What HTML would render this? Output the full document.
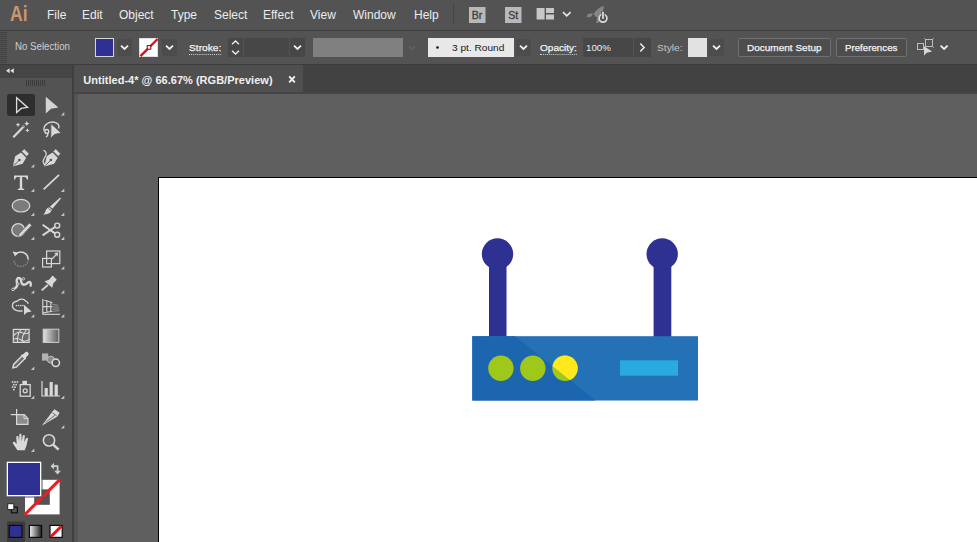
<!DOCTYPE html>
<html><head><meta charset="utf-8">
<style>
*{margin:0;padding:0;box-sizing:border-box}
html,body{width:977px;height:542px;overflow:hidden;background:#5f5f5f;font-family:"Liberation Sans",sans-serif;}
div{position:absolute}
#menubar{left:0;top:0;width:977px;height:30px;background:#535353;}
.ai{left:9.5px;top:1px;font-size:21.5px;font-weight:bold;color:#c9976f;line-height:26px;transform-origin:0 0;transform:scaleX(.82)}
.m{top:7px;font-size:12px;color:#ececec;line-height:16px;white-space:nowrap}
#ctrl{left:0;top:31px;width:977px;height:33px;background:#535353;}
#sep1{left:0;top:30px;width:977px;height:1px;background:#3d3d3d}
#sep2{left:0;top:64px;width:977px;height:1px;background:#3d3d3d}
.t{font-size:9.8px;color:#e8e8e8;line-height:12px;white-space:nowrap;top:42.2px;transform-origin:0 50%}
.u{border-bottom:1px dotted #cfcfcf;padding-bottom:0px}
.dk{background:#474747;top:38px;height:19px}
.dd{background:#4c4c4c;top:39px;height:17px;width:15px;border-radius:1px}
.btn{top:38px;height:19px;border:1px solid #707070;border-radius:2px;background:#4d4d4d}
#tools{left:0;top:65px;width:72px;height:477px;background:#535353;}
#toolsedge{left:72px;top:65px;width:2px;height:477px;background:#3f3f3f}
#toolhdr{left:0;top:65px;width:72px;height:12.5px;background:#454545}
#tabbar{left:74px;top:65px;width:903px;height:28px;background:#424242}
#tab{left:74px;top:65px;width:229px;height:26.5px;background:#4f4f4f}
#tabline{left:74px;top:91.5px;width:903px;height:2px;background:#454545}
#tabtxt{left:83.3px;letter-spacing:.02px;top:73px;font-size:11px;font-weight:bold;color:#f0f0f0;line-height:14px;white-space:nowrap}
#art{left:158px;top:177px;width:819px;height:365px;background:#fff;border-left:1px solid #000;border-top:1px solid #000}
svg{position:absolute;left:0;top:0}
</style></head><body>
<div id="menubar">
<div class="ai">Ai</div>
<div class="m" style="left:47px">File</div>
<div class="m" style="left:82px">Edit</div>
<div class="m" style="left:119px">Object</div>
<div class="m" style="left:171px">Type</div>
<div class="m" style="left:214px">Select</div>
<div class="m" style="left:263px">Effect</div>
<div class="m" style="left:310px">View</div>
<div class="m" style="left:353px">Window</div>
<div class="m" style="left:414px">Help</div>
</div>
<div id="sep1"></div>
<div id="ctrl"></div>
<div id="sep2"></div>
<!-- control bar items -->
<div style="left:0;top:32px;width:7px;height:32px;background:repeating-linear-gradient(180deg,#414141 0,#414141 1px,#525252 1px,#525252 2px)"></div>
<div class="t" id="nosel" style="transform:scaleX(0.970);font-size:10px;top:40.7px;left:15.0px;color:#cecece">No Selection</div>
<div style="left:95px;top:38px;width:19px;height:19px;background:#2e3192;border:1px solid #d6d6d6"></div>
<div class="dd" style="left:117px"></div>
<div style="left:139.300px;top:37.800px;width:19px;height:19px;background:#fff;border:1px solid #e0e0e0"></div>
<div class="dd" style="left:162px"></div>
<div class="t u" id="stroke" style="transform:scaleX(1.040);-webkit-text-stroke:.25px #f2f2f2;left:188.6px;color:#f2f2f2">Stroke:</div>
<div class="dk" style="left:228px;width:15px"></div>
<div class="dk" style="left:244px;width:45px"></div>
<div class="dk" style="left:290px;width:15px"></div>
<div style="left:313px;top:38px;width:90px;height:19px;background:#808080"></div>
<div style="left:428px;top:38px;width:86px;height:19px;background:#e8e8e8"></div>
<div class="t" id="brush" style="transform:scaleX(1.034);left:452.0px;color:#1a1a1a">3 pt. Round</div>
<div class="dd" style="left:516px"></div>
<div class="t u" id="opac" style="transform:scaleX(1.024);-webkit-text-stroke:.25px #f2f2f2;left:539.6px;color:#f2f2f2">Opacity:</div>
<div class="dk" style="left:583px;width:50px"></div>
<div class="dk" style="left:634px;width:17px"></div>
<div class="t" id="pct" style="transform:scaleX(1.043);font-size:9.3px;top:41.8px;left:585.6px;color:#f0f0f0">100%</div>
<div class="t" id="style" style="transform:scaleX(1.040);left:656.6px;color:#c4c4c4">Style:</div>
<div style="left:688px;top:38px;width:19px;height:19px;background:#e2e2e2"></div>
<div class="dd" style="left:709px"></div>
<div class="btn" style="left:738px;width:93px"></div>
<div class="t" id="docsetup" style="transform:scaleX(1.022);-webkit-text-stroke:.25px #f2f2f2;left:747.1px;color:#f4f4f4">Document Setup</div>
<div class="btn" style="left:836px;width:71px"></div>
<div class="t" id="prefs" style="transform:scaleX(0.992);-webkit-text-stroke:.25px #f2f2f2;left:845.3px;color:#f4f4f4">Preferences</div>

<div id="tools"></div>
<div id="toolhdr"></div>
<div id="toolsedge"></div>
<div id="tabbar"></div>
<div id="tab"></div>
<div id="tabline"></div>
<div id="tabtxt">Untitled-4* @ 66.67% (RGB/Preview)</div>
<div style="left:74px;top:93.5px;width:4px;height:449px;background:#545454"></div>
<div id="art"></div>

<!-- ROUTER -->
<svg id="router" width="977" height="542">
<rect x="489" y="254" width="17.5" height="84" fill="#2e3192"/>
<circle cx="497.5" cy="254" r="15.7" fill="#2e3192"/>
<rect x="653.6" y="254" width="17.7" height="84" fill="#2e3192"/>
<circle cx="662.2" cy="254" r="15.7" fill="#2e3192"/>
<rect x="472.3" y="336.2" width="225.7" height="64.3" fill="#2471b5"/>
<path d="M472.3 336.2H515L595.500 400.500H472.3Z" fill="#1c65af"/>
<clipPath id="lt"><path d="M515 336.2L595.500 400.500H700V336.2Z"/></clipPath>
<circle cx="500.9" cy="368.2" r="12.7" fill="#9fc81a"/>
<circle cx="532.8" cy="368.2" r="12.7" fill="#9fc81a"/>
<circle cx="565" cy="368.2" r="12.7" fill="#9fc81a"/>
<circle cx="565" cy="368.2" r="12.7" fill="#fde91c" clip-path="url(#lt)"/>
<rect x="620" y="360.300" width="58" height="15.400" fill="#29abe2"/>
</svg>
<!-- ICONS -->
<svg id="icons" width="977" height="542">

<!-- menubar icons -->
<rect x="453" y="4" width="1" height="20" fill="#454545"/>
<rect x="469" y="7" width="16.5" height="16" fill="#b9b9b9"/>
<text x="471.8" y="19.3" font-size="10.5" fill="#3c3c3c" stroke="#3c3c3c" stroke-width=".3" font-family="Liberation Sans">Br</text>
<rect x="505" y="7" width="16.5" height="16" fill="#b9b9b9"/>
<text x="508.3" y="19.3" font-size="10.5" fill="#3c3c3c" stroke="#3c3c3c" stroke-width=".3" font-family="Liberation Sans">St</text>
<rect x="536.6" y="8" width="8" height="11.5" fill="#c8c8c8"/>
<rect x="546" y="8" width="8" height="5" fill="#c8c8c8"/>
<rect x="546" y="14.5" width="8" height="5" fill="#c8c8c8"/>
<path d="M563 12.2l3.8 3.6 3.8-3.6" stroke="#e8e8e8" stroke-width="1.6" fill="none"/>
<!-- gpu rocket -->
<g fill="#868686" transform="translate(0 2.6)">
<path d="M604 3.500c-4.500 1-8 4-10.500 8l3.500 3.800c4-2.500 6.500-6.500 7-11.800z"/>
<path d="M593.400 10.600l-5.600.9-1.300 3.100 4.600-.4zM597.300 15.500l-1.200 5.200 2.600-.6 1.400-5.800z"/>
</g>
<circle cx="603" cy="18.300" r="3.900" fill="#535353" stroke="#dcdcdc" stroke-width="1.700"/>
<rect x="601.300" y="11" width="3.400" height="7.400" fill="#535353"/>
<rect x="602.100" y="11.800" width="1.800" height="7" fill="#dcdcdc"/>
<!-- control bar glyphs -->

<path d="M121 45.6l3.500 3.300 3.500-3.300" stroke="#f0f0f0" stroke-width="1.800" fill="none"/>
<path d="M166 45.6l3.500 3.300 3.500-3.300" stroke="#f0f0f0" stroke-width="1.800" fill="none"/>
<path d="M140.500 56.200L157.600 39" stroke="#d9101c" stroke-width="2.400"/>
<rect x="147.200" y="45.600" width="3.600" height="3.600" fill="#fff" stroke="#7a0a10" stroke-width="1"/>
<path d="M232 44.3l3.5-3.3 3.5 3.3M232 50.7l3.5 3.3 3.5-3.3" stroke="#ededed" stroke-width="1.4" fill="none"/>
<path d="M294 45.6l3.500 3.300 3.500-3.300" stroke="#f0f0f0" stroke-width="1.800" fill="none"/>
<path d="M409 46l3.3 3.2 3.3-3.2" stroke="#626262" stroke-width="1.4" fill="none"/>
<circle cx="437.5" cy="47.5" r="1.3" fill="#111"/>
<path d="M520 45.6l3.500 3.300 3.500-3.300" stroke="#f0f0f0" stroke-width="1.800" fill="none"/>
<path d="M640.3 43.5l3.8 4-3.8 4" stroke="#ededed" stroke-width="1.5" fill="none"/>
<path d="M713 45.6l3.500 3.300 3.500-3.300" stroke="#f0f0f0" stroke-width="1.800" fill="none"/>
<!-- arrange icon -->
<g fill="none" stroke="#bdbdbd" stroke-width="1"><rect x="917.500" y="43.500" width="6" height="6"/><rect x="925.500" y="39.500" width="7" height="7"/><path d="M924.300 38.300l1.200 1.200M933.700 38.300l-1.200 1.200M933.700 47.700l-1.200-1.200"/></g>
<path d="M924 46.200v9.400l2.800-2.800 5.400-1.400z" fill="#d6d6d6"/>
<path d="M940.6 45.6l3.500 3.300 3.500-3.300" stroke="#f0f0f0" stroke-width="1.800" fill="none"/>
<!-- tab close -->
<path d="M289.200 76.300l5.600 6M294.800 76.300l-5.600 6" stroke="#f2f2f2" stroke-width="1.900"/>
<!-- tool header -->
<path d="M9.600 68.200l-3.600 2.500 3.600 2.500zM13.800 68.200l-3.600 2.500 3.600 2.500z" fill="#e0e0e0"/>
<g fill="#3c3c3c"><rect x="26" y="80" width="1" height="6"/><rect x="28" y="80" width="1" height="6"/><rect x="30" y="80" width="1" height="6"/><rect x="32" y="80" width="1" height="6"/><rect x="34" y="80" width="1" height="6"/><rect x="36" y="80" width="1" height="6"/><rect x="38" y="80" width="1" height="6"/><rect x="40" y="80" width="1" height="6"/><rect x="42" y="80" width="1" height="6"/><rect x="44" y="80" width="1" height="6"/></g>

<!-- TOOLS -->
<rect x="7" y="94" width="28" height="22" rx="2.5" fill="#2e2e2e"/>
<path d="M64.3 115.5v-3.4l-3.4 3.4zM34.3 167.5v-3.4l-3.4 3.4zM34.3 192v-3.4l-3.4 3.4zM64.3 192v-3.4l-3.4 3.4zM34.3 216v-3.4l-3.4 3.4zM64.3 216v-3.4l-3.4 3.4zM34.3 240v-3.4l-3.4 3.4zM64.3 240v-3.4l-3.4 3.4zM34.3 269.5v-3.4l-3.4 3.4zM64.3 269.5v-3.4l-3.4 3.4zM34.3 293.5v-3.4l-3.4 3.4zM64.3 293.5v-3.4l-3.4 3.4zM34.3 317.5v-3.4l-3.4 3.4zM64.3 317.5v-3.4l-3.4 3.4zM34.3 370v-3.4l-3.4 3.4zM34.3 399v-3.4l-3.4 3.4zM64.3 399v-3.4l-3.4 3.4zM64.3 428.5v-3.4l-3.4 3.4zM34.3 452v-3.4l-3.4 3.4z" fill="#c4c4c4"/>
<!-- selection -->
<path d="M16.6 97.8V112.6L21.2 108.4L27.6 107.4Z" fill="none" stroke="#dedede" stroke-width="1.3" stroke-linejoin="miter"/>
<!-- direct selection -->
<path d="M45.8 96.8V113.6L51 108.8L58.4 107.6Z" fill="#d4d4d4"/>
<!-- magic wand -->
<path d="M13.3 137.2L24.2 126" stroke="#d8d8d8" stroke-width="2.2"/>
<path d="M22.6 125.2l1.6 1.6" stroke="#8a8a8a" stroke-width="2.2"/>
<g fill="#d8d8d8"><path d="M18 122.5l.7 1.6 1.6.7-1.6.7-.7 1.6-.7-1.6-1.6-.7 1.6-.7z"/><path d="M26.8 121l.8 1.8 1.8.8-1.8.8-.8 1.8-.8-1.8-1.8-.8 1.8-.8z"/><path d="M27.4 128.2l.7 1.5 1.5.7-1.5.7-.7 1.5-.7-1.5-1.5-.7 1.5-.7z"/></g>
<!-- lasso -->
<g fill="none" stroke="#d8d8d8" stroke-width="1.400"><path d="M44.200 131C42.600 125.600 48.200 121.800 52.600 122C57.400 122.200 60 125 58.600 128.600"/><circle cx="46.800" cy="131.400" r="1.900"/><path d="M47.600 133.200c.6 1.500 0 3-1.800 3.600"/></g>
<path d="M50.800 123.400V138.400L54.400 134.600L61.200 133Z" fill="#d8d8d8" stroke="#535353" stroke-width=".9"/>
<!-- pen -->
<g id="pen"><path d="M12.8 166.6L15.2 156.2L21 152.6L26.2 157.8L22.6 163.8Z" fill="#d8d8d8"/><path d="M13.4 166L18.6 160.8" stroke="#535353" stroke-width=".9"/><circle cx="19.4" cy="160" r="1.3" fill="#535353"/><path d="M21.6 151.4L24.2 148.8L29.2 153.8L26.6 156.4Z" fill="#d8d8d8" stroke="#535353" stroke-width=".7"/></g>
<!-- curvature -->
<use href="#pen" x="31.5" y="0"/>
<path d="M43.4 150.4c3.4 1 3.4 4 1.6 6.6-1.8 2.600-3.200 5.800.4 8.400" fill="none" stroke="#d8d8d8" stroke-width="1.3"/>
<!-- type -->
<path d="M14 175.400h14v4.200h-1.200c-.2-1.700-.8-2.600-2.400-2.600h-2.200v10.600c0 1 .6 1.300 2 1.400v1h-6.400v-1c1.400-.1 2-.4 2-1.400v-10.600h-2.200c-1.600 0-2.200.9-2.400 2.600h-1.200z" fill="#d8d8d8"/>
<!-- line -->
<path d="M43.600 189.300L59 174.800" stroke="#d8d8d8" stroke-width="1.700"/>
<!-- ellipse -->
<ellipse cx="21" cy="205.700" rx="8.800" ry="6.300" fill="#7c7c7c" stroke="#d8d8d8" stroke-width="1.200"/>
<!-- brush -->
<path d="M60.200 197.600l.8.800-8.600 10.400-2.400-2.400z" fill="#d8d8d8"/>
<path d="M49.200 207.200l2.600 2.600c-.4 2.600-3.400 4.800-8.800 4.800 2.400-1.400 2.200-3 3-4.800.600-1.400 1.800-2.200 3.200-2.600z" fill="#d8d8d8"/>
<path d="M48.600 208.400l2.200 2.200" stroke="#535353" stroke-width=".8"/>
<!-- shaper -->
<circle cx="18.200" cy="230" r="6.400" fill="#7a7a7a" stroke="#d8d8d8" stroke-width="1.300"/>
<path d="M29.400 223l2.400 2.400-10.400 10.800-3.800 1.600 1.400-4z" fill="#d8d8d8" stroke="#535353" stroke-width=".7"/>
<!-- scissors -->
<g fill="none" stroke="#d8d8d8"><circle cx="57.200" cy="225.600" r="2.500" stroke-width="1.400"/><circle cx="57.200" cy="234.800" r="2.500" stroke-width="1.400"/><path d="M55 227l-12.400 8.400M55 233.400l-12.400-8.600" stroke-width="1.900"/></g>
<!-- rotate -->
<g fill="none"><path d="M15.400 254.800a7.200 7.200 0 0 1 12.800 4.600" stroke="#d8d8d8" stroke-width="1.500"/><path d="M28.200 259.400a7.200 7.200 0 0 1-14.200 1.600" stroke="#8e8e8e" stroke-width="1.400" stroke-dasharray="1.500 1.200"/></g>
<path d="M12.600 251.400l5.400 1-1.200 1.600-1.800 2.400z" fill="#d8d8d8"/>
<!-- scale -->
<g fill="none" stroke="#d8d8d8" stroke-width="1.200"><rect x="42.600" y="258.400" width="8.800" height="8.600"/><rect x="46.600" y="251" width="13.200" height="12.600"/><path d="M52 259l5.400-5.600"/></g>
<path d="M58.200 252.400l-4 .6 3.400 3.400z" fill="#d8d8d8"/>
<!-- width -->
<path d="M14 289c3-1.500 3.600-4.400 2.800-7.200-.6-2.200.8-4.400 2.800-3.600 2.400 1 .8 4.400 3 6 2.200 1.600 4.400-.6 5.600-1.800 1.600-1.400 3.200.4 2.400 3.200" fill="none" stroke="#d8d8d8" stroke-width="2.400" stroke-linecap="round"/>
<g fill="#535353" stroke="#d8d8d8" stroke-width=".9"><circle cx="13" cy="289.400" r="1.300"/><circle cx="23.400" cy="278.800" r="1.200"/><circle cx="18" cy="284" r="1.200"/></g>
<!-- pin -->
<path d="M41.700 290.400L47.800 285" stroke="#d8d8d8" stroke-width="1.900"/>
<path d="M44.600 281.200L49 279.800L52.600 275.500L56.800 279.800L53.400 283.200L52.200 287.800Z" fill="#d8d8d8"/>
<!-- shape builder -->
<g fill="none" stroke="#d8d8d8" stroke-width="1.300"><path d="M22.600 310.800c-5 .8-10.200-1-10.200-5 0-2.600 2.400-4.400 5.200-4.800 1.600-2.400 6.400-2.600 8.200.2 1.400.5 2.200 1.400 2.400 2.600"/></g>
<g fill="#d8d8d8"><circle cx="16.400" cy="305.600" r=".8"/><circle cx="18.600" cy="305.600" r=".8"/><circle cx="20.800" cy="305.600" r=".8"/><circle cx="23" cy="305.600" r=".8"/></g>
<path d="M24 304.800v10.200l2.800-2.600 4.800-.8z" fill="#d8d8d8"/>
<!-- perspective -->
<g fill="none" stroke="#d8d8d8" stroke-width="1.100"><path d="M42.800 299v15.400M42.800 299.600l9.600 3.200M42.800 306.400l9.600.4M42.800 313l9.600-1.800M46.800 300.800v11.800M50.800 302v9.600"/><path d="M42.800 314.300h17.200" /></g>
<g stroke="#9a9a9a" stroke-width=".9"><path d="M52.400 304.200l5.600 1.200M52.400 306.800l6.400.4M52.400 309.200l6.800-.2M52.400 311.400l7-.8"/></g>
<!-- mesh -->
<rect x="13.300" y="329.400" width="15.800" height="13" fill="#6a6a6a" stroke="#d8d8d8" stroke-width="1.200"/>
<g fill="none" stroke="#d8d8d8" stroke-width="1.050"><path d="M13.300 335.800c3-3.600 6-4.400 9.600-2.800 2.400 1 4.400 1 6.200-.6M13.300 339.600c2.800-1.600 5.400-1.300 7.800.4 2.600 1.800 5.600 1.400 8-.6M17.600 342.400c-.6-4.400.4-9 3.600-13M22.600 342.400c-.8-3.400 0-6.400 1.400-8.600s2-3 2-4.400"/></g>
<!-- gradient -->
<defs><linearGradient id="gr" x1="0" x2="1" y1="0" y2="0"><stop offset="0" stop-color="#e4e4e4"/><stop offset="1" stop-color="#5c5c5c"/></linearGradient><linearGradient id="gr2" x1="0" x2="1" y1="0" y2="0"><stop offset="0" stop-color="#f4f4f4"/><stop offset="1" stop-color="#1c1c1c"/></linearGradient></defs>
<rect x="43.200" y="329.200" width="15.600" height="13.200" fill="url(#gr)" stroke="#cfcfcf" stroke-width="1"/>
<!-- eyedropper -->
<path d="M12.800 367.800l.8-3.400 8.600-8.600 2.800 2.800-8.600 8.600z" fill="#6e6e6e" stroke="#d8d8d8" stroke-width="1.400"/>
<path d="M20.800 355l2.400-.8 2.400-2.200c1.400-1.200 4 1.200 2.800 2.800l-2.200 2.400-.8 2.400z" fill="#dcdcdc"/>
<!-- blend -->
<rect x="42" y="353.400" width="6.200" height="7.200" fill="#b2b2b2"/>
<circle cx="50.800" cy="359.600" r="3.500" fill="#8c8c8c" stroke="#bcbcbc" stroke-width="1"/>
<circle cx="55.800" cy="362.800" r="3.700" fill="#535353" stroke="#dcdcdc" stroke-width="1.500"/>
<!-- symbol sprayer -->
<g fill="#d8d8d8"><rect x="11.800" y="381.200" width="1.600" height="1.600"/><rect x="14.200" y="381.200" width="1.600" height="1.600"/><rect x="16.600" y="381.200" width="1.600" height="1.600"/><rect x="13" y="383.800" width="1.600" height="1.600"/><rect x="15.400" y="383.800" width="1.600" height="1.600"/><rect x="11.800" y="386.200" width="1.600" height="1.600"/><rect x="14.200" y="386.400" width="1.600" height="1.600"/><rect x="13" y="388.800" width="1.600" height="1.600"/></g>
<rect x="22.400" y="380.800" width="4.600" height="3.600" fill="#d8d8d8"/>
<rect x="20.200" y="384.600" width="10" height="11.600" fill="none" stroke="#d8d8d8" stroke-width="1.300"/>
<circle cx="25.200" cy="390.800" r="2" fill="none" stroke="#d8d8d8" stroke-width="1.300"/>
<!-- graph -->
<path d="M42 381v15h18" fill="none" stroke="#d8d8d8" stroke-width="1.200"/>
<g fill="#d8d8d8"><rect x="44.600" y="388" width="3.200" height="8"/><rect x="49.600" y="382" width="3.200" height="14"/><rect x="54.600" y="384.600" width="3.200" height="11.400"/></g>
<!-- artboard -->
<path d="M16.600 409v5M10.800 414.600h5.400" stroke="#d8d8d8" stroke-width="1.200"/>
<path d="M16.600 414.600h7.600l3.800 3.800v6h-11.400z" fill="#8c8c8c" stroke="#d8d8d8" stroke-width="1.200"/>
<path d="M24 414.800v3.800h3.800" fill="none" stroke="#d8d8d8" stroke-width="1"/>
<!-- slice -->
<path d="M41.800 425.800L52.600 411.200L54.600 409.200L59.600 412.800L57.400 416.400Z" fill="#d8d8d8"/>
<path d="M52.400 412.800L56.600 415.800M45.600 422.400L54.800 415.400" stroke="#535353" stroke-width=".8"/>
<!-- hand -->
<path d="M17.4 450.2C16 448 14.600 445.600 13 443.400C12.200 442.200 13.600 441 14.800 442L16.700 444L16.300 437.400C16.200 435.800 18.300 435.600 18.500 437.200L19.100 441.600L19.300 435.200C19.300 433.400 21.500 433.400 21.500 435.200L21.700 441.600L22.700 436C23 434.400 25 434.700 24.800 436.400L24.100 442.200L25.900 438.400C26.600 437 28.400 437.700 27.900 439.300C27.100 442.500 26.700 446.500 24.700 450.200Z" fill="#dadada"/>
<!-- zoom -->
<circle cx="49" cy="440.400" r="5.600" fill="none" stroke="#d8d8d8" stroke-width="1.600"/>
<circle cx="49" cy="440.400" r="3.800" fill="#666" opacity=".6"/>
<path d="M53.200 444.600l5.400 5" stroke="#d8d8d8" stroke-width="2.600"/>
<!-- fill/stroke -->
<rect x="25" y="479.800" width="34.600" height="34.600" fill="#fff"/>
<rect x="34.200" y="489.400" width="15.600" height="15.400" fill="#535353"/>
<path d="M24.400 515L60 479.400" stroke="#ec1c24" stroke-width="3"/>
<rect x="7.200" y="462.200" width="33.600" height="33.600" fill="#2e3192" stroke="#fff" stroke-width="1.600"/>
<rect x="6" y="461" width="36" height="36" fill="none" stroke="#535353" stroke-width="1"/>
<!-- swap -->
<path d="M53.400 466.200h4.200v4.800" fill="none" stroke="#cdcdcd" stroke-width="1.700"/>
<path d="M50.600 466.200l3.400-3.400v6.800zM57.600 474.600l-3.400-3.800h6.800z" fill="#cdcdcd"/>
<!-- default -->
<rect x="11.400" y="507.200" width="6" height="5.600" fill="#535353" stroke="#111" stroke-width="1.200"/>
<rect x="7.800" y="503.800" width="6" height="5.600" fill="#fff" stroke="#111" stroke-width=".8"/>
<!-- mode buttons -->
<rect x="7" y="521.500" width="18" height="20.500" fill="#3a3a3a"/>
<rect x="9.200" y="525.400" width="12.800" height="12" fill="#2e3192" stroke="#0a0a0a" stroke-width="1.200"/>
<rect x="29.400" y="525.400" width="12.200" height="12" fill="url(#gr2)" stroke="#0a0a0a" stroke-width="1.200"/>
<rect x="50" y="525.400" width="12.200" height="12" fill="#fff" stroke="#0a0a0a" stroke-width="1.200"/>
<path d="M50.800 536.800l10.800-10.800" stroke="#e8121f" stroke-width="3"/>
</svg>
</body></html>
